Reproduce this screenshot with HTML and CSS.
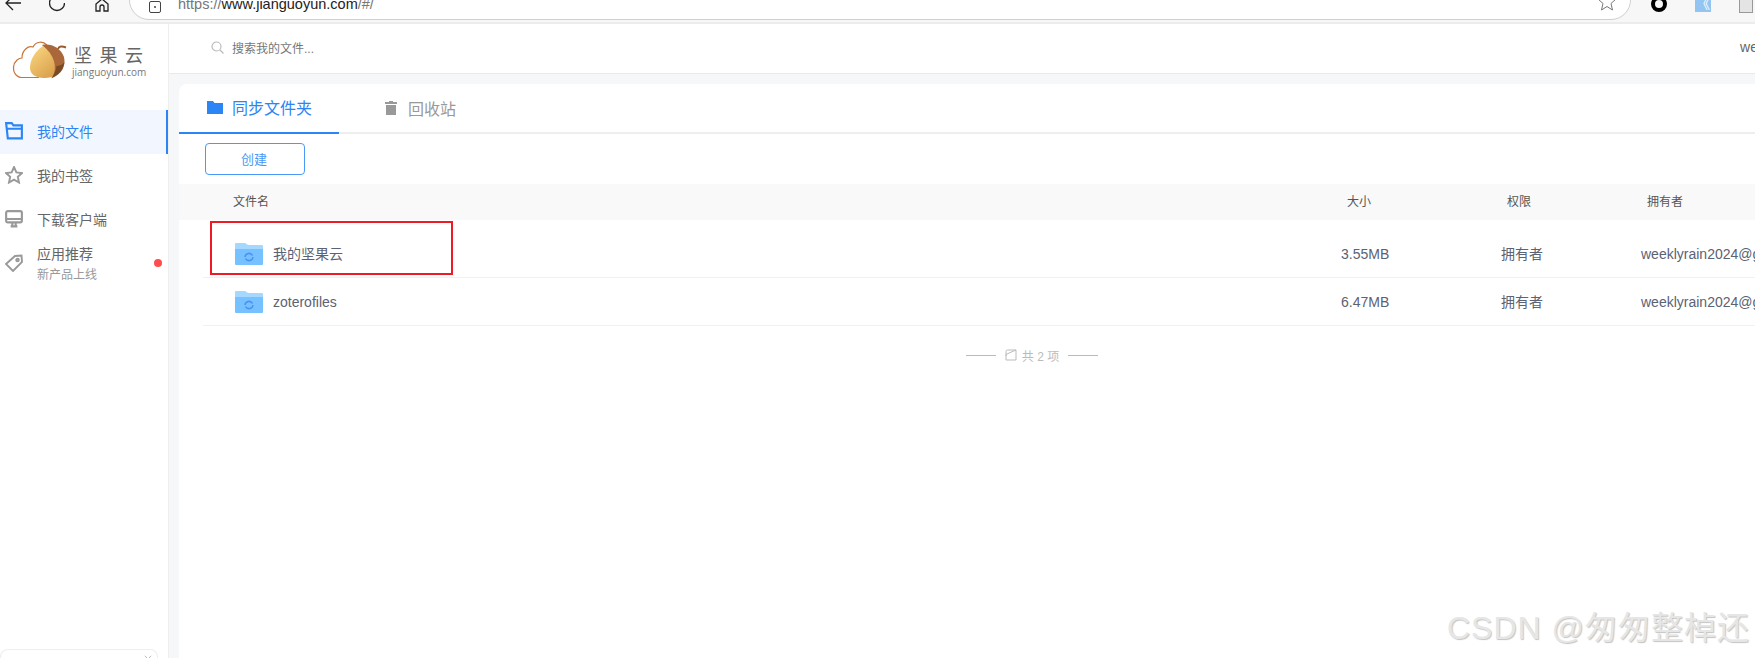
FILE: index.html
```html
<!DOCTYPE html>
<html lang="zh-CN">
<head>
  <meta charset="UTF-8" />
  <title>坚果云</title>
  <link rel="stylesheet" href="styles.css">
</head>
<body>
  <div class="browser">
    <svg class="tool tool-back" viewBox="0 0 16 12"><path d="M16 3H1M8 10L1 3L8 -4"/></svg>
    <svg class="tool tool-reload" viewBox="0 0 16 12"><path d="M8 -4.500A7.500 7.500 0 1 0 15.500 3"/></svg>
    <svg class="tool tool-home" viewBox="0 0 14 12"><path d="M1 11V4L7 -1L13 4V11H9V7Q9 5 7 5Q5 5 5 7V11Z"/></svg>
    <div class="urlbar">
      <svg class="site-icon" viewBox="0 0 12 12"><rect x="0.500" y="0.500" width="11" height="11" rx="1.500"/><circle class="dot" cx="6" cy="6" r="1"/></svg>
      <span class="url"><span class="url-dim">https://</span>www.jianguoyun.com<span class="url-dim">/#/</span></span>
      <svg class="url-star" viewBox="0 0 18 18"><path d="M9 -3L11.500 3.500L18 4L13 8.500L14.500 15L9 11.500L3.500 15L5 8.500L0 4L6.500 3.500Z"/></svg>
    </div>
    <div class="ext-ring"></div>
    <div class="ext-blue">《</div>
    <div class="ext-doc"></div>
  </div>

  <div class="app">
    <aside class="sidebar">
      <div class="logo">
        <svg class="logo-mark" viewBox="10 40 56 40">
          <defs>
            <linearGradient id="nut" x1="0" y1="0" x2="0.700" y2="1">
              <stop offset="0" stop-color="#fbd985"/>
              <stop offset="1" stop-color="#dba24c"/>
            </linearGradient>
          </defs>
          <path d="M38 77.500H21C15 77.500 12 72 12.500 67C13 61 18 58 21 58C21 50 27 45.500 32 47C35 41 42 41 46 45" fill="#fff" stroke="#c8743a" stroke-width="1.200"/>
          <path d="M42 46C34 51 29 60 29 68C29 74 35 78.500 44 78C48 78 52 77 54 75C57 66 53 54 42 46Z" fill="url(#nut)"/>
          <path d="M41 45C50 43 60 48 63 57C65 66 61 74 51 78C57 68 54 55 41 45Z" fill="#a9673a"/>
          <path d="M63.500 62C62 70 58 75 50 78.500C53 75 55 71 55.500 66C58 66 61 65 63.500 62Z" fill="#7a4a24"/>
          <path d="M57 49C58 46 61 46 65 47.500" fill="none" stroke="#9c5a2b" stroke-width="2"/>
        </svg>
        <div class="logo-text">
          <div class="logo-name">坚果云</div>
          <div class="logo-site">jianguoyun.com</div>
        </div>
      </div>
      <nav class="nav">
        <a class="nav-item active">
          <svg class="nav-icon" viewBox="0 0 16 16"><path d="M1 1H6L7.500 3H15V14.500H2.500L1 1ZM1.500 6H15"/></svg>
          <span>我的文件</span>
        </a>
        <a class="nav-item">
          <svg class="nav-icon" viewBox="0 0 18 18"><path d="M9 1L11.400 6.400L17 7L12.800 10.800L14 16.500L9 13.600L4 16.500L5.200 10.800L1 7L6.600 6.400Z"/></svg>
          <span>我的书签</span>
        </a>
        <a class="nav-item">
          <svg class="nav-icon" viewBox="0 0 16 16"><rect x="1" y="1" width="14" height="10" rx="1.500"/><path d="M1 8H15M5 14.500H11M6.500 11V14.500M9.500 11V14.500"/></svg>
          <span>下载客户端</span>
        </a>
        <a class="nav-item nav-two">
          <svg class="nav-icon" viewBox="0 0 18 18"><path d="M1 10L10 2L16.500 1.500L17 8L8 17Z"/><circle cx="12.500" cy="6" r="1.300"/></svg>
          <span class="nav-lines">
            <span>应用推荐</span>
            <small>新产品上线</small>
          </span>
          <i class="red-dot"></i>
        </a>
      </nav>
      <div class="side-tip">
        <svg class="side-close" viewBox="0 0 10 10"><path d="M1 1L9 9M9 1L1 9"/></svg>
      </div>
    </aside>

    <main class="main">
      <header class="topbar">
        <svg class="search-icon" viewBox="0 0 13 13"><circle cx="5.500" cy="5.500" r="4.500"/><path d="M9 9L12.500 12.500"/></svg>
        <span class="search-text">搜索我的文件...</span>
        <span class="user">weeklyrain2024@gmail.com</span>
      </header>

      <section class="card">
        <div class="tabs">
          <div class="tab active">
            <svg class="tab-icon" viewBox="0 0 16 13"><path d="M0 0H6L7.500 2H16V13H0Z"/></svg>
            <span>同步文件夹</span>
          </div>
          <div class="tab">
            <svg class="tab-icon tab-icon-trash" viewBox="0 0 12 14"><path d="M4 0H8V1H12V3H0V1H4ZM1 4H11V14H1Z"/></svg>
            <span>回收站</span>
          </div>
        </div>

        <div class="toolbar">
          <button class="btn">创建</button>
        </div>

        <div class="thead">
          <span class="col-name">文件名</span>
          <span>大小</span>
          <span>权限</span>
          <span>拥有者</span>
        </div>

        <div class="tbody">
          <div class="row">
            <div class="col-name">
              <svg class="folder" viewBox="0 0 28 22"><path class="folder-tab" d="M0 1Q0 0 1 0H10L13 2H27Q28 2 28 3V8H0Z"/><path class="folder-body" d="M0 6H28V21Q28 22 27 22H1Q0 22 0 21Z"/><path class="folder-sync" d="M10 14A4 4 0 0 1 17.500 12.500M18 14A4 4 0 0 1 10.500 15.500"/></svg>
              <span class="zh">我的坚果云</span>
            </div>
            <span>3.55MB</span>
            <span class="zh">拥有者</span>
            <span>weeklyrain2024@gmail.com</span>
          </div>
          <div class="row">
            <div class="col-name">
              <svg class="folder" viewBox="0 0 28 22"><path class="folder-tab" d="M0 1Q0 0 1 0H10L13 2H27Q28 2 28 3V8H0Z"/><path class="folder-body" d="M0 6H28V21Q28 22 27 22H1Q0 22 0 21Z"/><path class="folder-sync" d="M10 14A4 4 0 0 1 17.500 12.500M18 14A4 4 0 0 1 10.500 15.500"/></svg>
              <span>zoterofiles</span>
            </div>
            <span>6.47MB</span>
            <span class="zh">拥有者</span>
            <span>weeklyrain2024@gmail.com</span>
          </div>
          <div class="mark-box"></div>
        </div>

        <div class="count">
          <i class="count-line"></i>
          <svg class="count-icon" viewBox="0 0 12 12"><path d="M1 11V2.500Q1 1 2.500 1H11V11ZM1 7Q1 4.500 3 4.500L11 1"/></svg>
          <span>共 2 项</span>
          <i class="count-line"></i>
        </div>
      </section>
    </main>
  </div>

  <div class="watermark">CSDN @匆匆整棹还</div>
</body>
</html>
```

FILE: styles.css
```css
* {
  box-sizing: border-box;
}
html, body {
  height: 658px;
  margin: 0;
  overflow: hidden;
}
body {
  position: relative;
  background: #fff;
  font-family: "Liberation Sans", "Noto Sans CJK SC", sans-serif;
  color: #5b6273;
}
svg {
  display: block;
  flex: none;
}

/* browser chrome, cut off at the top */
.browser {
  display: flex;
  align-items: flex-end;
  height: 24px;
  background: #f7f7f7;
  border-bottom: 2px solid #ececec;
  overflow: hidden;
}
.tool {
  fill: none;
  stroke: #222;
  stroke-width: 1.300;
  margin-bottom: 10px;
}
.tool-back {
  width: 16px;
  height: 12px;
  margin-left: 5px;
}
.tool-reload {
  width: 16px;
  height: 12px;
  margin-left: 28px;
}
.tool-home {
  width: 14px;
  height: 12px;
  margin-left: 30px;
}
.urlbar {
  display: flex;
  align-items: flex-end;
  flex: none;
  width: 1502px;
  height: 44px;
  margin-left: 20px;
  margin-bottom: 2px;
  padding: 0 14px 6px 19px;
  background: #fff;
  border: 1px solid #cfcfcf;
  border-radius: 20px;
}
.site-icon {
  width: 12px;
  height: 12px;
  fill: none;
  stroke: #444;
}
.site-icon .dot {
  fill: #444;
  stroke: none;
}
.url {
  margin-left: 17px;
  margin-bottom: -1px;
  font-size: 14.500px;
  line-height: 20px;
  color: #222;
}
.url-dim {
  color: #767676;
}
.url-star {
  width: 18px;
  height: 18px;
  margin-left: auto;
  fill: none;
  stroke: #777;
}
.ext-ring {
  flex: none;
  width: 16px;
  height: 16px;
  margin-left: 20px;
  margin-bottom: 10px;
  border: 4px solid #000;
  border-radius: 50%;
}
.ext-blue {
  flex: none;
  width: 16px;
  height: 22px;
  margin-left: 28px;
  margin-bottom: 10px;
  background: #93c5f3;
  color: #fff;
  font-size: 14px;
  line-height: 26px;
  text-align: center;
  overflow: hidden;
}
.ext-doc {
  flex: none;
  width: 14px;
  height: 22px;
  margin-left: 28px;
  margin-bottom: 9px;
  background: #e4e4e4;
  border: 1px solid #999;
}

.app {
  display: flex;
  height: 634px;
}

/* left column */
.sidebar {
  display: flex;
  flex-direction: column;
  flex: none;
  width: 169px;
  background: #fff;
  border-right: 1px solid #eeeeee;
}
.logo {
  display: flex;
  height: 86px;
  padding: 16px 0 0 11px;
}
.logo-mark {
  width: 56px;
  height: 40px;
}
.logo-text {
  margin-left: 5px;
}
.logo-name {
  margin-top: 7px;
  padding-left: 2px;
  font-size: 18px;
  line-height: 19px;
  letter-spacing: 7.500px;
  color: #666;
  white-space: nowrap;
}
.logo-site {
  font-family: "Open Sans", sans-serif;
  font-size: 10px;
  line-height: 13px;
  color: #777;
}
.nav-item {
  display: flex;
  align-items: center;
  height: 44px;
  padding: 0 0 2px 5px;
  font-size: 14px;
  color: #666;
}
.nav-item.active {
  background: #f2f7ff;
  border-right: 2px solid #2b85f5;
  color: #2b85f5;
}
.nav-icon {
  width: 18px;
  height: 18px;
  margin-right: 14px;
  fill: none;
  stroke: #999;
  stroke-width: 1.900;
}
.nav-item.active .nav-icon {
  stroke: #2b85f5;
}
.nav-lines {
  display: flex;
  flex-direction: column;
  gap: 4px;
  margin-top: 2px;
  line-height: 17px;
}
.nav-lines small {
  font-size: 12px;
  line-height: 16px;
  color: #999;
}
.red-dot {
  width: 8px;
  height: 8px;
  margin-left: auto;
  margin-right: 6px;
  background: #ff4d4f;
  border-radius: 50%;
}
.side-tip {
  display: flex;
  justify-content: flex-end;
  width: 158px;
  height: 9px;
  margin-top: auto;
  padding: 5px 5px 0 0;
  border: 1px solid #eee;
  border-bottom: 0;
  border-radius: 8px 8px 0 0;
}
.side-close {
  width: 8px;
  height: 8px;
  fill: none;
  stroke: #aaa;
}

/* right column */
.main {
  flex: 1;
  min-width: 0;
  background: #f6f7f9;
  overflow: hidden;
}
.topbar {
  display: flex;
  align-items: center;
  height: 50px;
  padding: 0 0 3px 42px;
  background: #fff;
  border-bottom: 1px solid #e9e9e9;
  white-space: nowrap;
}
.search-icon {
  width: 13px;
  height: 13px;
  fill: none;
  stroke: #bbb;
  stroke-width: 1.200;
}
.search-text {
  margin-left: 8px;
  font-size: 12px;
  color: #777;
}
.user {
  margin-left: 1426px;
  font-size: 14px;
  color: #666;
}
.card {
  width: 1706px;
  height: 574px;
  margin: 10px 0 0 10px;
  background: #fff;
  border-radius: 8px 0 0 0;
}
.tabs {
  display: flex;
  height: 50px;
  border-bottom: 2px solid #eeeeee;
}
.tab {
  display: flex;
  align-items: center;
  gap: 9px;
  height: 50px;
  padding: 0 27px 2px 28px;
  font-size: 16px;
  color: #999;
}
.tab.active {
  width: 160px;
  border-bottom: 2px solid #2b85f5;
  color: #2b85f5;
}
.tab-icon {
  width: 16px;
  height: 13px;
  fill: #2b85f5;
}
.tab-icon-trash {
  width: 12px;
  height: 14px;
  margin-right: 2px;
  fill: #999;
}
.tab + .tab {
  padding-left: 46px;
}
.toolbar {
  padding: 9px 0 9px 26px;
}
.btn {
  display: block;
  width: 100px;
  height: 32px;
  padding: 0 2px 2px 0;
  background: #fff;
  border: 1px solid #4a98f7;
  border-radius: 4px;
  font: inherit;
  font-size: 13px;
  color: #4a98f7;
}
.thead, .row {
  display: grid;
  grid-template-columns: 1138px 160px 140px 1fr;
  align-items: center;
}
.thead {
  height: 36px;
  padding: 0 0 4px 24px;
  background: #f9f9f9;
  font-size: 12px;
  color: #555;
}
.thead span {
  padding-left: 6px;
}
.thead .col-name {
  padding-left: 30px;
}
.tbody {
  position: relative;
  padding: 10px 0 0 24px;
}
.row {
  height: 48px;
  border-bottom: 1px solid #f1f1f1;
  font-size: 14px;
  white-space: nowrap;
}
.row .col-name {
  display: flex;
  align-items: center;
  gap: 10px;
  padding-left: 32px;
}
.zh {
  margin-bottom: 2px;
}
.folder {
  width: 28px;
  height: 22px;
}
.folder-tab {
  fill: #a4d8ff;
}
.folder-body {
  fill: #76c1ff;
}
.folder-sync {
  fill: none;
  stroke: #4a90f5;
  stroke-width: 1.500;
}
.mark-box {
  position: absolute;
  left: 31px;
  top: 1px;
  width: 243px;
  height: 54px;
  border: 2px solid #ed1c24;
}
.count {
  display: flex;
  align-items: center;
  justify-content: center;
  gap: 9px;
  margin-top: 18px;
  height: 22px;
  font-size: 12px;
  color: #bbb;
}
.count-line {
  width: 30px;
  height: 1px;
  background: #bbb;
}
.count-icon {
  width: 12px;
  height: 12px;
  margin-right: -4px;
  fill: none;
  stroke: #bbb;
}

/* blog watermark stamped over the shot */
.watermark {
  position: absolute;
  right: 5px;
  bottom: 10px;
  font-size: 32px;
  line-height: 40px;
  letter-spacing: 1px;
  color: #e6e6e6;
  text-shadow: 1px 1px 1px #c4c4c4;
  white-space: nowrap;
}
```
